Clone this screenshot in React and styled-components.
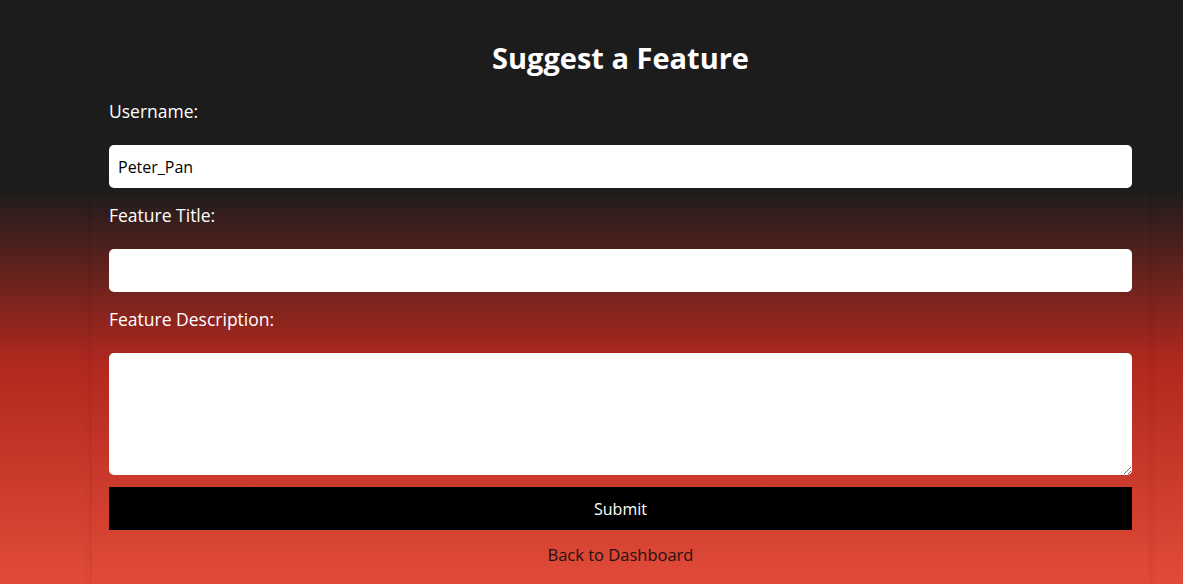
import React from "react";
import styled, { createGlobalStyle } from "styled-components";

const GlobalStyle = createGlobalStyle`
  html, body {
    margin: 0;
    padding: 0;
  }
  body {
    min-height: 100vh;
    background: linear-gradient(to bottom, #1c1c1c 32%, #b1281e 62%, #e24b39 100%);
    font-family: "Open Sans", "Noto Sans", sans-serif;
    color: #fff;
  }
`;

const Page = styled.div`
  min-height: 584px;
  padding-left: 58px;
  display: flex;
  justify-content: center;
`;

const Card = styled.div`
  width: 1057px;
  box-sizing: border-box;
  padding: 12px 17px 20px;
  box-shadow: 0 0 8px rgba(0, 0, 0, 0.12);
`;

const Title = styled.h1`
  margin: 26px 0 21px;
  text-align: center;
  font-size: 29px;
  font-weight: 700;
  line-height: 40px;
`;

const Form = styled.form`
  display: flex;
  flex-direction: column;
`;

const Label = styled.label`
  display: block;
  font-size: 17.5px;
  line-height: 24px;
  margin: ${(p) => (p.first ? "0" : "15px")} 0 22px;
`;

const Input = styled.input`
  box-sizing: border-box;
  width: 100%;
  height: 43px;
  padding: 0 9px;
  border: none;
  border-radius: 5px;
  background: #fff;
  font-family: inherit;
  font-size: 16px;
  color: #000;
  outline: none;
`;

const TextArea = styled.textarea`
  box-sizing: border-box;
  width: 100%;
  height: 122px;
  padding: 9px;
  border: none;
  border-radius: 5px;
  background: #fff;
  font-family: inherit;
  font-size: 16px;
  display: block;
  resize: vertical;
  outline: none;
`;

const SubmitButton = styled.button`
  margin-top: 12px;
  height: 43px;
  border: none;
  background: #000;
  color: #fff;
  font-family: inherit;
  font-size: 16px;
  cursor: pointer;
`;

const BackLink = styled.a`
  display: block;
  margin-top: 13px;
  text-align: center;
  font-size: 16.5px;
  line-height: 24px;
  color: #1f1111;
  text-decoration: none;
`;

const App = () => {
  return (
    <>
      <GlobalStyle />
      <Page>
        <Card>
          <Title>Suggest a Feature</Title>
          <Form onSubmit={(e) => e.preventDefault()}>
            <Label first htmlFor="username">Username:</Label>
            <Input id="username" defaultValue="Peter_Pan" />
            <Label htmlFor="title">Feature Title:</Label>
            <Input id="title" />
            <Label htmlFor="description">Feature Description:</Label>
            <TextArea id="description" />
            <SubmitButton type="submit">Submit</SubmitButton>
          </Form>
          <BackLink href="#">Back to Dashboard</BackLink>
        </Card>
      </Page>
    </>
  );
};

export default App;
